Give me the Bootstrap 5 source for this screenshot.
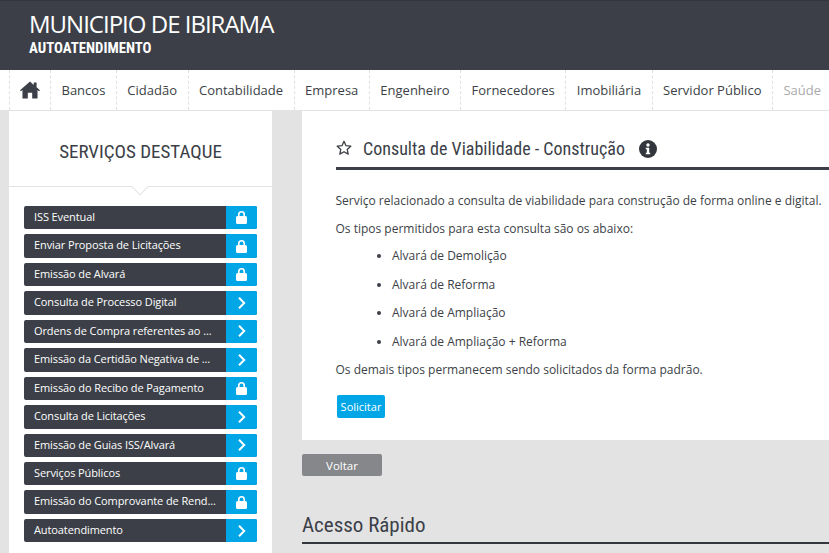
<!DOCTYPE html>
<html lang="pt-BR">
<head>
  <meta charset="UTF-8">
  <title>Municipio de Ibirama - Autoatendimento</title>
  <meta name="viewport" content="width=device-width, initial-scale=1">
  <link href="https://cdn.jsdelivr.net/npm/bootstrap@5.3.0/dist/css/bootstrap.min.css" rel="stylesheet">
  <style>
    body { background-color: #e3e3e3; font-family: "Open Sans", sans-serif; font-size: 12px; color: #3c3f47; overflow: hidden; height: 553px; }
    .top-head { height: 70px; background-color: #3c3f47; border-top: 1px solid #33363d; padding: 9px 0 0 29px; color: #fff; }
    .top-head h1 { font-family: "Open Sans", sans-serif; font-size: 24px; line-height: 28px; letter-spacing: -1px; margin: 0; font-weight: 400; }
    .top-head h2 { font-family: Roboto, sans-serif; font-stretch: condensed; font-size: 14.8px; line-height: 18px; font-weight: 700; margin: 1px 0 0; }
    .menu-bar { height: 41px; background-color: #fff; border-bottom: 1px solid #e3e3e3; padding-left: 9px; white-space: nowrap; overflow: hidden; }
    .menu-bar a { display: block; height: 40px; line-height: 40px; padding: 0 10.5px; color: #3c3f47; text-decoration: none; font-size: 13px; border-left: 1px dashed #e0e0e0; }
    .menu-bar a.home-link { padding: 0 10px; width: 41px; }
    .menu-bar a.off { color: #aaa; }
    .side-box { width: 263px; height: 442px; margin-left: 9px; background-color: #fff; flex-shrink: 0; }
    .side-title { height: 76px; border-bottom: 1px solid #e3e3e3; text-align: center; font-family: Roboto, sans-serif; font-stretch: condensed; font-size: 19px; line-height: 81px; position: relative; }
    .side-title::after { content: ""; position: absolute; left: 125px; top: 70px; width: 12px; height: 12px; background: #fff; border-right: 1px solid #e3e3e3; border-bottom: 1px solid #e3e3e3; transform: rotate(45deg); }
    .svc-list { padding: 19px 15px 0; margin: 0; list-style: none; }
    .svc-list li { display: flex; height: 23.45px; margin-bottom: 5px; color: #fff; border-radius: 2px; overflow: hidden; background-color: #3c3f47; }
    .svc-name { flex: 1; padding-left: 10px; font-size: 11px; letter-spacing: -.1px; line-height: 22px; white-space: nowrap; }
    .svc-go { width: 31px; background-color: #00a6e6; display: flex; align-items: center; justify-content: center; }
    .main-col { margin-left: 30px; flex: 1; min-width: 0; }
    .info-panel { height: 329px; background-color: #fff; padding: 0 0 0 34px; }
    .info-title { height: 59px; border-bottom: 3px solid #3c3f47; font-family: Roboto, sans-serif; font-stretch: condensed; font-size: 18px; padding-top: 24px; line-height: 28px; gap: 11px; }
    .info-title .star-ic { margin-top: 5px; }
    .info-title .info-ic { margin-top: 5px; margin-left: 3px; }
    .info-body { padding-top: 17px; font-size: 12px; line-height: 28.4px; white-space: nowrap; }
    .info-body > div { margin-left: -.5px; }
    .info-body ul { margin: -1.5px 0 .5px; padding-left: 56px; }
    .btn-solicitar { background-color: #00a6e6; color: #fff; font-size: 11px; width: 48px; padding: 0; height: 23px; line-height: 23px; border: 0; border-radius: 2px; margin: 10px 0 0 1px; display: block; }
    .btn-voltar { display: block; width: 80px; height: 22px; line-height: 21px; padding: 0; margin-top: 14px; background-color: #85878a; color: #fff; font-size: 11.5px; border: 0; border-radius: 2px; }
    .quick-title { font-family: Roboto, sans-serif; font-stretch: condensed; font-size: 21px; line-height: 26px; margin: 36px 0 0; padding-bottom: 4px; border-bottom: 2px solid #33363d; font-weight: 400; color: #3c3f47; }
  </style>
</head>
<body>

<header class="top-head">
  <h1>MUNICIPIO DE IBIRAMA</h1>
  <h2>AUTOATENDIMENTO</h2>
</header>

<nav class="menu-bar d-flex">
  <a class="home-link d-flex align-items-center" href="#">
    <svg width="21" height="18" viewBox="0 0 21 18"><path fill="#3c3f47" d="M10.5 0 0 9.2l1 1.2 1.600-1.300V18h5.600v-6h4.600v6h5.600V9.100l1.600 1.300 1-1.200-3.600-3.100V1h-3v2.700z"/></svg>
  </a>
  <a href="#">Bancos</a>
  <a href="#">Cidadão</a>
  <a href="#">Contabilidade</a>
  <a href="#">Empresa</a>
  <a href="#">Engenheiro</a>
  <a href="#">Fornecedores</a>
  <a href="#">Imobiliária</a>
  <a href="#">Servidor Público</a>
  <a class="off" href="#">Saúde</a>
</nav>

<div class="d-flex">
  <aside class="side-box">
    <div class="side-title">SERVIÇOS DESTAQUE</div>
    <ul class="svc-list" id="svcList"></ul>
  </aside>

  <main class="main-col">
    <section class="info-panel">
      <div class="info-title d-flex align-items-start">
        <svg class="star-ic" width="16" height="16" viewBox="0 0 16 16"><path fill="none" stroke="#3c3f47" stroke-width="1.3" stroke-linejoin="round" d="M8 1.300l2 4.400 4.800.5-3.600 3.200 1 4.700L8 11.700l-4.200 2.400 1-4.700L1.200 6.200 6 5.700z"/></svg>
        <span>Consulta de Viabilidade - Construção</span>
        <svg class="info-ic" width="18" height="18" viewBox="0 0 18 18"><circle cx="9" cy="9" r="9" fill="#33363d"/><circle cx="9" cy="5" r="1.700" fill="#fff"/><path fill="#fff" d="M6.800 7.800h3.400v5h1v1.500H6.800v-1.500h1v-3.500h-1z"/></svg>
      </div>
      <div class="info-body">
        <div>Serviço relacionado a consulta de viabilidade para construção de forma online e digital.</div>
        <div>Os tipos permitidos para esta consulta são os abaixo:</div>
        <ul>
          <li>Alvará de Demolição</li>
          <li>Alvará de Reforma</li>
          <li>Alvará de Ampliação</li>
          <li>Alvará de Ampliação + Reforma</li>
        </ul>
        <div>Os demais tipos permanecem sendo solicitados da forma padrão.</div>
        <button class="btn btn-solicitar">Solicitar</button>
      </div>
    </section>
    <button class="btn btn-voltar">Voltar</button>
    <h3 class="quick-title">Acesso Rápido</h3>
  </main>
</div>

<script>
  const lockIcon = '<svg width="11" height="13" viewBox="0 0 11 13"><path fill="none" stroke="#fff" stroke-width="1.6" d="M2.800 6V3.500a2.700 2.700 0 0 1 5.400 0V6"/><rect y="5" width="11" height="8" rx="1.500" fill="#fff"/></svg>';
  const arrowIcon = '<svg width="8" height="12" viewBox="0 0 8 12"><path fill="none" stroke="#fff" stroke-width="2" d="M1 .8 6.200 6 1 11.200"/></svg>';
  const services = [
    ["ISS Eventual", 1],
    ["Enviar Proposta de Licitações", 1],
    ["Emissão de Alvará", 1],
    ["Consulta de Processo Digital", 0],
    ["Ordens de Compra referentes ao ...", 0],
    ["Emissão da Certidão Negativa de ...", 0],
    ["Emissão do Recibo de Pagamento", 1],
    ["Consulta de Licitações", 0],
    ["Emissão de Guias ISS/Alvará", 0],
    ["Serviços Públicos", 1],
    ["Emissão do Comprovante de Rend...", 1],
    ["Autoatendimento", 0]
  ];
  document.getElementById("svcList").innerHTML = services.map(s =>
    `<li><span class="svc-name">${s[0]}</span><span class="svc-go">${s[1] ? lockIcon : arrowIcon}</span></li>`
  ).join("");
</script>

<script src="https://cdn.jsdelivr.net/npm/bootstrap@5.3.0/dist/js/bootstrap.bundle.min.js"></script>
</body>
</html>
